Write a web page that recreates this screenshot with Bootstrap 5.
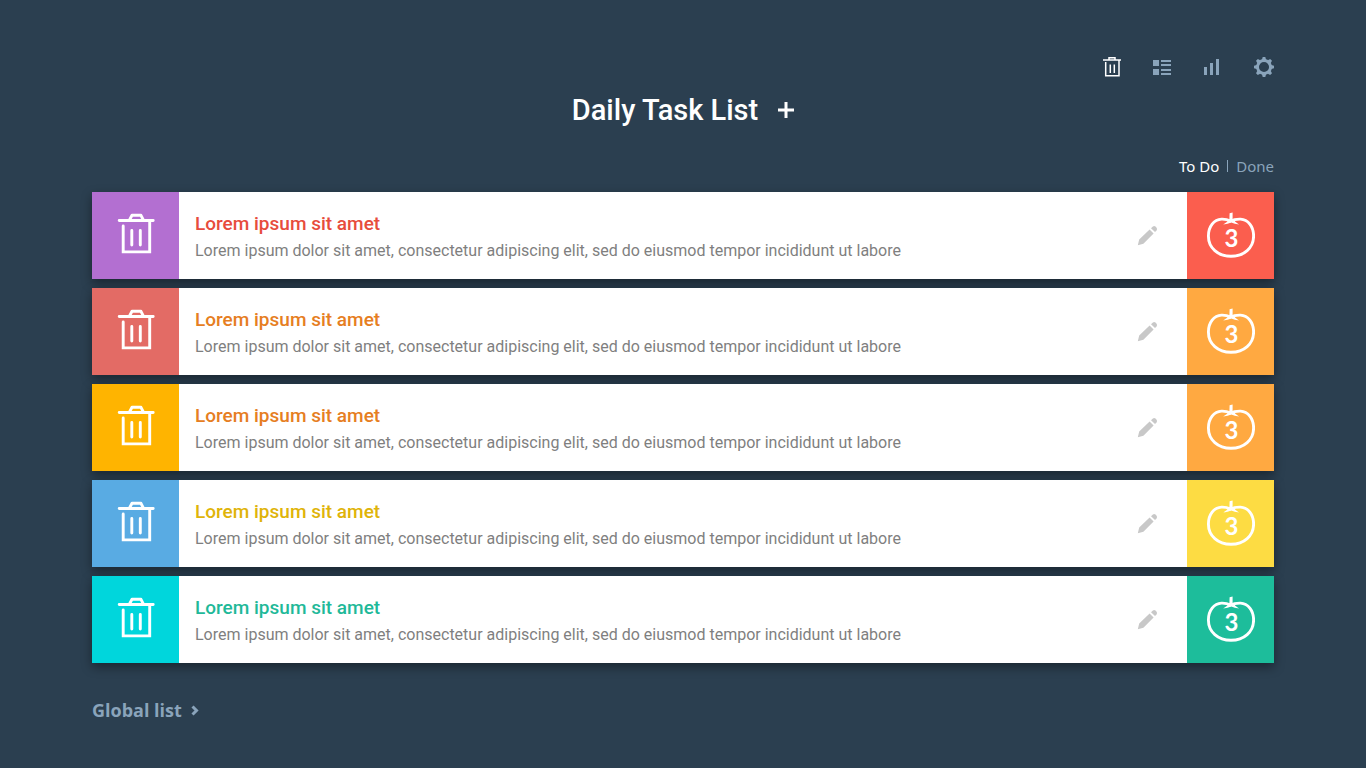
<!DOCTYPE html>
<html lang="en">
<head>
<meta charset="utf-8">
<meta name="viewport" content="width=device-width, initial-scale=1">
<title>Daily Task List</title>
<link rel="stylesheet" href="https://cdn.jsdelivr.net/npm/bootstrap@5.3.0/dist/css/bootstrap.min.css">
<style>
  body { background: #2b3f50; color: #fff; font-family: Roboto, sans-serif; }
  .page { padding: 56px 92px 40px; }
  .bare { padding: 0; border: 0; background: none; color: inherit; line-height: 1; }
  .muted, .toolbar .bare { color: #8aa4bb; }
  .toolbar { gap: 31px; }
  .toolbar .bare.active { color: #fff; }
  .toolbar svg { width: 20px; height: 22px; }
  .page-title { font-size: 29px; line-height: 32px; font-weight: 500; }
  .headline { gap: 20px; margin-top: 16px; }
  .filters { margin-top: 30px; font: 15px/20px "Noto Sans", sans-serif; }
  .filters a { text-decoration: none; }
  .divider { width: 1px; height: 12px; background: #8aa4bb; }
  .tasks { gap: 9px; margin-top: 16px; }
  .task { min-height: 87px; background: #fff; box-shadow: 0 4px 10px rgba(0, 0, 0, .4); }
  .tile { width: 87px; flex: none; }
  .task-title { font-size: 19px; line-height: 24px; font-weight: 500; }
  .task-text { font-size: 16px; line-height: 24px; color: #7f7f7f; margin-top: 3px; }
  .task-body { padding: 4px 16px 0; }
  .edit { color: #c8c8c8; margin-right: 29px; }
  .count { font: 700 24px/24px Lato, sans-serif; padding-top: 4px; padding-left: 2px; }
  .global { font: 700 18px/24px "Open Sans", sans-serif; margin-top: 35px; gap: 9px; text-decoration: none; }
  .violet { background: #b36fd1; } .coral { background: #e36b65; } .amber { background: #ffb400; }
  .sky { background: #59abe3; } .aqua { background: #00d6dc; }
  .red { background: #fb5e4e; } .orange { background: #ffa941; } .yellow { background: #fddc43; } .green { background: #1dbd9b; }
  .ink-red { color: #e74c3c; } .ink-orange { color: #e67e22; } .ink-yellow { color: #dfb40a; } .ink-green { color: #1fb999; }
</style>
</head>
<body>
<svg class="d-none" aria-hidden="true">
  <symbol id="trash" viewBox="-1 0 39 45" overflow="visible">
    <g fill="none" stroke="currentColor" stroke-width="2.900" stroke-linecap="round" stroke-linejoin="round">
      <path d="M2.200 7.500H36.200M12.500 7L15 2.300H24L26.300 7"/>
      <path d="M6.200 13V38.900H32.700V8" stroke-linejoin="miter"/>
      <path d="M14.800 17.500V32M23.300 17.500V32"/>
    </g>
  </symbol>
  <symbol id="tomato" viewBox="0 0 49 47">
    <path d="M24.500 9C21 7.200 18 7 15.500 7.100C8 7.500 2.400 14.500 2.400 24C2.400 36 12 44.300 25 44.300S47.600 36 47.600 24C47.600 14.500 42 7.500 34.500 7.100C31 7 28 7.200 24.500 9Z" fill="none" stroke="currentColor" stroke-width="2.900"/>
    <path d="M23.600 1.200L26.600.400V7L30 7L29 9.500L33 12.600Q28.500 12.300 25.200 10.600Q22 12.300 17.200 12.600L21.500 9.500L20 7L23.400 7Z" fill="currentColor"/>
  </symbol>
  <symbol id="pencil" viewBox="0 0 21 21">
    <path fill="currentColor" d="M12.600 4.600L16.600 8.600L6.400 18.700L.800 20.200L2.200 14.600ZM14 3.200L15.900 1.500Q17.200.600 18.500 1.600L19.600 2.800Q20.500 4.100 19.600 5.400L18 7.100Z"/>
  </symbol>
</svg>

<main class="container-fluid page">
  <nav class="toolbar d-flex justify-content-end" aria-label="Views">
    <button type="button" class="bare active" aria-label="Trash">
      <svg viewBox="0 0 20 22"><g fill="none" stroke="currentColor" stroke-width="1.500"><path d="M2 4H20M8 3.500V1.700H14V3.500M4.700 6V19.800H18V4"/><path d="M9.300 8.500V17M13.300 8.500V17"/></g></svg>
    </button>
    <button type="button" class="bare" aria-label="List">
      <svg viewBox="0 0 20 22"><path fill="currentColor" d="M1 4H7V10H1ZM1 13H7V19H1ZM9 4H19V6H9ZM9 8H19V10H9ZM9 13H19V15H9ZM9 17H19V19H9Z"/></svg>
    </button>
    <button type="button" class="bare" aria-label="Statistics">
      <svg viewBox="0 0 20 22"><path fill="currentColor" d="M1 11H4V19H1ZM7 7H10V19H7ZM13 3H16V19H13Z"/></svg>
    </button>
    <button type="button" class="bare" aria-label="Settings">
      <svg viewBox="0 0 20 22"><circle cx="10" cy="11" r="6.500" fill="none" stroke="currentColor" stroke-width="2.900"/>
        <g fill="currentColor"><path id="tooth" d="M8.700 1H11.300L12.300 4.500H7.700Z"/><use href="#tooth" transform="rotate(45 10 11)"/><use href="#tooth" transform="rotate(90 10 11)"/><use href="#tooth" transform="rotate(135 10 11)"/><use href="#tooth" transform="rotate(180 10 11)"/><use href="#tooth" transform="rotate(225 10 11)"/><use href="#tooth" transform="rotate(270 10 11)"/><use href="#tooth" transform="rotate(315 10 11)"/></g></svg>
    </button>
  </nav>

  <header class="headline d-flex justify-content-center align-items-center">
    <h1 class="page-title m-0">Daily Task List</h1>
    <button type="button" class="bare" aria-label="Add task"><svg class="d-block" width="16" height="16" viewBox="0 0 16 16"><path fill="currentColor" d="M6.500 0H9.500V6.500H16V9.500H9.500V16H6.500V9.500H0V6.500H6.500Z"/></svg></button>
  </header>

  <div class="filters d-flex justify-content-end align-items-center gap-2">
    <a href="#" class="text-white">To Do</a><span class="divider"></span><a href="#" class="muted">Done</a>
  </div>

  <section class="tasks d-flex flex-column">
    <article class="task d-flex">
      <button type="button" class="bare tile violet text-white" aria-label="Delete task"><svg width="39" height="45"><use href="#trash"/></svg></button>
      <div class="task-body flex-grow-1 align-self-center"><h2 class="task-title ink-red m-0">Lorem ipsum sit amet</h2><p class="task-text mb-0">Lorem ipsum dolor sit amet, consectetur adipiscing elit, sed do eiusmod tempor incididunt ut labore</p></div>
      <button type="button" class="bare edit" aria-label="Edit task"><svg width="21" height="21"><use href="#pencil"/></svg></button>
      <div class="tile red position-relative d-flex align-items-center justify-content-center"><svg width="49" height="47"><use href="#tomato"/></svg><span class="count position-absolute">3</span></div>
    </article>
    <article class="task d-flex">
      <button type="button" class="bare tile coral text-white" aria-label="Delete task"><svg width="39" height="45"><use href="#trash"/></svg></button>
      <div class="task-body flex-grow-1 align-self-center"><h2 class="task-title ink-orange m-0">Lorem ipsum sit amet</h2><p class="task-text mb-0">Lorem ipsum dolor sit amet, consectetur adipiscing elit, sed do eiusmod tempor incididunt ut labore</p></div>
      <button type="button" class="bare edit" aria-label="Edit task"><svg width="21" height="21"><use href="#pencil"/></svg></button>
      <div class="tile orange position-relative d-flex align-items-center justify-content-center"><svg width="49" height="47"><use href="#tomato"/></svg><span class="count position-absolute">3</span></div>
    </article>
    <article class="task d-flex">
      <button type="button" class="bare tile amber text-white" aria-label="Delete task"><svg width="39" height="45"><use href="#trash"/></svg></button>
      <div class="task-body flex-grow-1 align-self-center"><h2 class="task-title ink-orange m-0">Lorem ipsum sit amet</h2><p class="task-text mb-0">Lorem ipsum dolor sit amet, consectetur adipiscing elit, sed do eiusmod tempor incididunt ut labore</p></div>
      <button type="button" class="bare edit" aria-label="Edit task"><svg width="21" height="21"><use href="#pencil"/></svg></button>
      <div class="tile orange position-relative d-flex align-items-center justify-content-center"><svg width="49" height="47"><use href="#tomato"/></svg><span class="count position-absolute">3</span></div>
    </article>
    <article class="task d-flex">
      <button type="button" class="bare tile sky text-white" aria-label="Delete task"><svg width="39" height="45"><use href="#trash"/></svg></button>
      <div class="task-body flex-grow-1 align-self-center"><h2 class="task-title ink-yellow m-0">Lorem ipsum sit amet</h2><p class="task-text mb-0">Lorem ipsum dolor sit amet, consectetur adipiscing elit, sed do eiusmod tempor incididunt ut labore</p></div>
      <button type="button" class="bare edit" aria-label="Edit task"><svg width="21" height="21"><use href="#pencil"/></svg></button>
      <div class="tile yellow position-relative d-flex align-items-center justify-content-center"><svg width="49" height="47"><use href="#tomato"/></svg><span class="count position-absolute">3</span></div>
    </article>
    <article class="task d-flex">
      <button type="button" class="bare tile aqua text-white" aria-label="Delete task"><svg width="39" height="45"><use href="#trash"/></svg></button>
      <div class="task-body flex-grow-1 align-self-center"><h2 class="task-title ink-green m-0">Lorem ipsum sit amet</h2><p class="task-text mb-0">Lorem ipsum dolor sit amet, consectetur adipiscing elit, sed do eiusmod tempor incididunt ut labore</p></div>
      <button type="button" class="bare edit" aria-label="Edit task"><svg width="21" height="21"><use href="#pencil"/></svg></button>
      <div class="tile green position-relative d-flex align-items-center justify-content-center"><svg width="49" height="47"><use href="#tomato"/></svg><span class="count position-absolute">3</span></div>
    </article>
  </section>

  <a href="#" class="global muted d-inline-flex align-items-center">Global list
    <svg width="8" height="12" viewBox="0 0 8 12"><path d="M1.500 2.500L5.500 6.500L1.500 10.500" fill="none" stroke="currentColor" stroke-width="3"/></svg>
  </a>
</main>
<script src="https://cdn.jsdelivr.net/npm/bootstrap@5.3.0/dist/js/bootstrap.bundle.min.js"></script>
</body>
</html>
